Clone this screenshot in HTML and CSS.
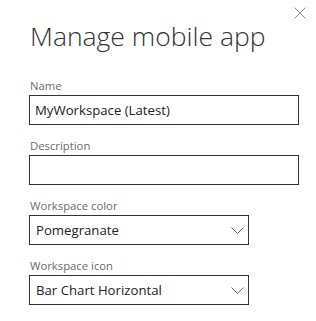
FILE: index.html
```html
<!DOCTYPE html>
<html lang="en">
<head>
    <meta charset="UTF-8" />
    <title>Manage mobile app</title>
    <link rel="stylesheet" href="styles.css">
</head>
<body>
    <div class="panel">
        <div class="panel-top">
            <button class="close" aria-label="Close">
                <svg width="12" height="12" viewBox="0 0 12 12">
                    <path d="M0.5 0.5 L11.5 11.5 M11.5 0.5 L0.5 11.5" stroke="#8a8594" stroke-width="1" fill="none" />
                </svg>
            </button>
        </div>

        <h1>Manage mobile app</h1>

        <div class="field">
            <label for="name">Name</label>
            <input type="text" id="name" class="text-input" value="MyWorkspace (Latest)" />
        </div>

        <div class="field">
            <label for="description">Description</label>
            <input type="text" id="description" class="text-input" />
        </div>

        <div class="field">
            <label>Workspace color</label>
            <div class="dropdown">
                <span>Pomegranate</span>
                <svg class="chevron" width="13" height="7" viewBox="0 0 13 7">
                    <path d="M0.5 0.5 L6.5 6.5 L12.5 0.5" stroke="#666" stroke-width="1" fill="none" />
                </svg>
            </div>
        </div>

        <div class="field">
            <label>Workspace icon</label>
            <div class="dropdown">
                <span>Bar Chart Horizontal</span>
                <svg class="chevron" width="13" height="7" viewBox="0 0 13 7">
                    <path d="M0.5 0.5 L6.5 6.5 L12.5 0.5" stroke="#666" stroke-width="1" fill="none" />
                </svg>
            </div>
        </div>
    </div>
</body>
</html>
```

FILE: styles.css
```css
* {
    box-sizing: border-box;
    margin: 0;
    padding: 0;
}
body {
    font-family: 'Open Sans', 'Noto Sans', sans-serif;
    background: #fff;
    color: #333;
}
.panel {
    width: 316px;
    height: 321px;
    padding: 0 18px 0 29px;
}
.panel-top {
    display: flex;
    justify-content: flex-end;
    height: 19px;
    padding-top: 7px;
}
.close {
    background: none;
    border: none;
    width: 12px;
    height: 12px;
    margin-right: -8px;
    cursor: pointer;
    display: block;
}
.close svg {
    display: block;
}
h1 {
    font-weight: 300;
    font-size: 26.5px;
    line-height: 34px;
    color: #333;
    margin-left: 1px;
    margin-bottom: 24px;
}
.field {
    margin-bottom: 12px;
}
label {
    display: block;
    font-size: 11.3px;
    line-height: 18px;
    color: #6b6b6b;
    margin-left: 1px;
}
.text-input {
    display: block;
    width: 270px;
    height: 30px;
    border: 1px solid #333;
    padding: 0 5px;
    font-family: inherit;
    font-size: 13.2px;
    color: #222;
    outline: none;
}
.dropdown {
    display: flex;
    align-items: center;
    justify-content: space-between;
    width: 220px;
    height: 30px;
    border: 1px solid #333;
    padding: 0 4px 0 6px;
    font-size: 13.2px;
    color: #222;
}
.chevron {
    display: block;
}
```
